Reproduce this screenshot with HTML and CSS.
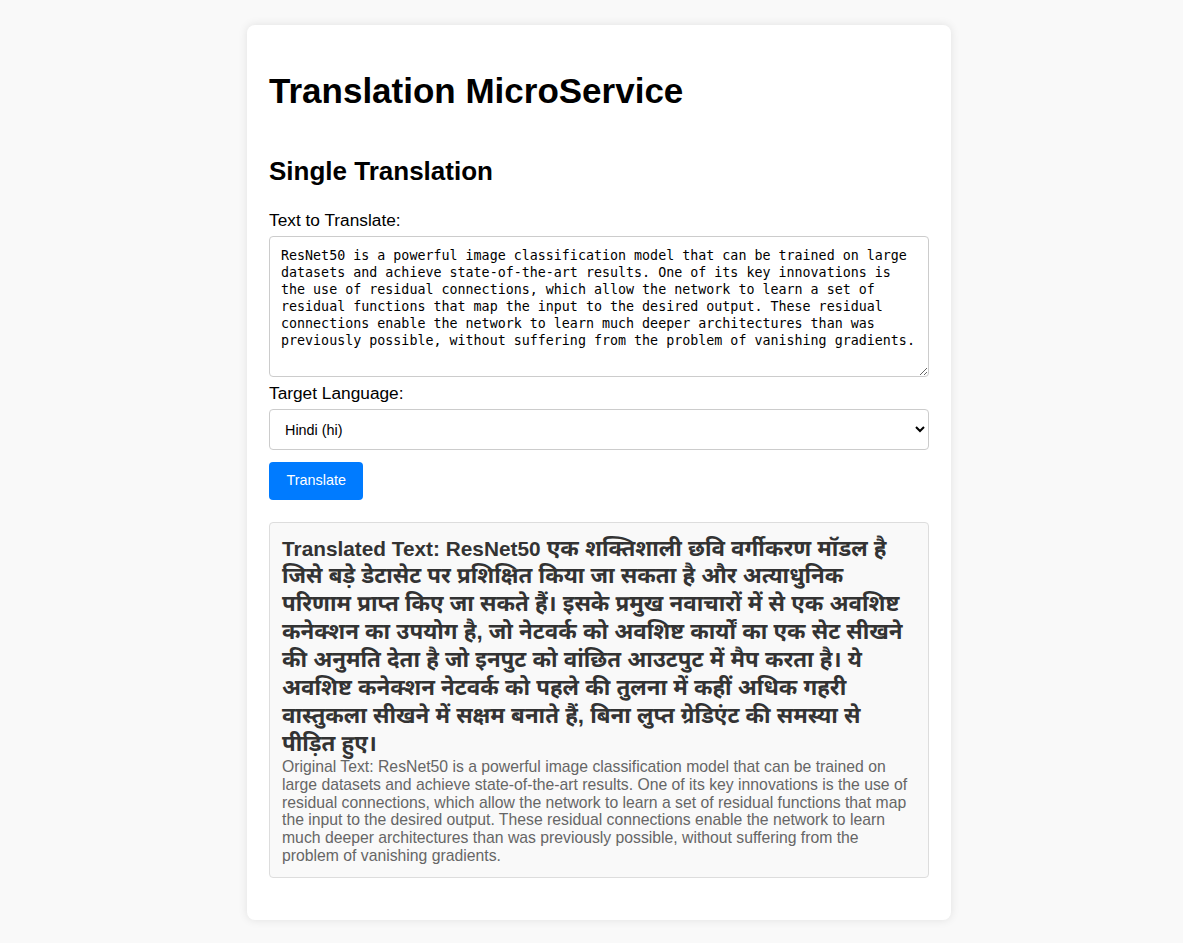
FILE: index.html
```html
<!DOCTYPE html>
<html lang="en">
<head>
<meta charset="utf-8">
<title>Translation MicroService</title>
<link rel="stylesheet" href="styles.css">
</head>
<body>
<div class="page">
  <div class="card">
    <h1 class="title">Translation MicroService</h1>
    <section class="single">
      <h2 class="section-title">Single Translation</h2>
      <form class="form">
        <label class="field-label" for="text">Text to Translate:</label>
        <textarea class="text-input" id="text">ResNet50 is a powerful image classification model that can be trained on large datasets and achieve state-of-the-art results. One of its key innovations is the use of residual connections, which allow the network to learn a set of residual functions that map the input to the desired output. These residual connections enable the network to learn much deeper architectures than was previously possible, without suffering from the problem of vanishing gradients.</textarea>
        <label class="field-label" for="lang">Target Language:</label>
        <select class="lang-select" id="lang">
          <option>Hindi (hi)</option>
        </select>
        <div class="actions">
          <button type="button" class="btn">Translate</button>
        </div>
      </form>
      <div class="result">
        <h3 class="translated" lang="hi"><span class="latin" lang="en">Translated Text: ResNet50</span> एक शक्तिशाली छवि वर्गीकरण मॉडल है जिसे बड़े डेटासेट पर प्रशिक्षित किया जा सकता है और अत्याधुनिक परिणाम प्राप्त किए जा सकते हैं। इसके प्रमुख नवाचारों में से एक अवशिष्ट कनेक्शन का उपयोग है, जो नेटवर्क को अवशिष्ट कार्यों का एक सेट सीखने की अनुमति देता है जो इनपुट को वांछित आउटपुट में मैप करता है। ये अवशिष्ट कनेक्शन नेटवर्क को पहले की तुलना में कहीं अधिक गहरी वास्तुकला सीखने में सक्षम बनाते हैं, बिना लुप्त ग्रेडिएंट की समस्या से पीड़ित हुए।</h3>
        <p class="original">Original Text: ResNet50 is a powerful image classification model that can be trained on large datasets and achieve state-of-the-art results. One of its key innovations is the use of residual connections, which allow the network to learn a set of residual functions that map the input to the desired output. These residual connections enable the network to learn much deeper architectures than was previously possible, without suffering from the problem of vanishing gradients.</p>
      </div>
    </section>
  </div>
</div>
</body>
</html>
```

FILE: styles.css
```css
* {
  box-sizing: border-box;
}

html, body {
  margin: 0;
  padding: 0;
}

body {
  background: #f9f9f9;
  font-family: "Liberation Sans", Arial, sans-serif;
  color: #000;
}

.page {
  display: flex;
  justify-content: center;
  padding: 25px 0 24px 15px;
}

.card {
  width: 704px;
  background: #fff;
  border-radius: 8px;
  box-shadow: 0 0 10px rgba(0, 0, 0, 0.1);
  padding: 22px;
}

.title {
  font-size: 35px;
  font-weight: bold;
  margin: 24px 0 45px;
}

.section-title {
  font-size: 26px;
  font-weight: bold;
  margin: 0 0 23px;
}

.form {
  display: flex;
  flex-direction: column;
  align-items: stretch;
}

.field-label {
  display: block;
  font-size: 17.3px;
  margin-bottom: 5px;
}

.text-input {
  display: block;
  width: 100%;
  height: 141px;
  padding: 10px 10px 10px 11px;
  border: 1px solid #ccc;
  border-radius: 4px;
  font-family: "DejaVu Sans Mono", monospace;
  font-size: 13.333px;
  line-height: 17px;
  color: #000;
  margin: 0 0 6px;
}

.lang-select {
  display: block;
  width: 100%;
  height: 41px;
  padding: 0 10px 0 11px;
  border: 1px solid #ccc;
  border-radius: 4px;
  background: #fff;
  font-family: "Liberation Sans", Arial, sans-serif;
  font-size: 14.4px;
  color: #000;
  margin-bottom: 12px;
}

.actions {
  display: flex;
}

.btn {
  background: #007bff;
  color: #fff;
  border: none;
  border-radius: 4px;
  padding: 10px 17.5px;
  font-family: "Liberation Sans", Arial, sans-serif;
  font-size: 14.4px;
  line-height: 17.5px;
  cursor: pointer;
}

.result {
  margin: 22px 0 20px;
  background: #f9f9f9;
  border: 1px solid #ddd;
  border-radius: 4px;
  padding: 12px;
}

.translated {
  margin: 0;
  font-size: 22.3px;
  line-height: 27.9px;
  font-weight: bold;
  color: #333;
  font-family: "Liberation Sans", Arial, "Noto Sans Devanagari", "Lohit Devanagari", sans-serif;
}

.latin {
  font-size: 20.8px;
}

.original {
  margin: 0;
  font-size: 15.75px;
  line-height: 17.9px;
  color: #666;
}
```
